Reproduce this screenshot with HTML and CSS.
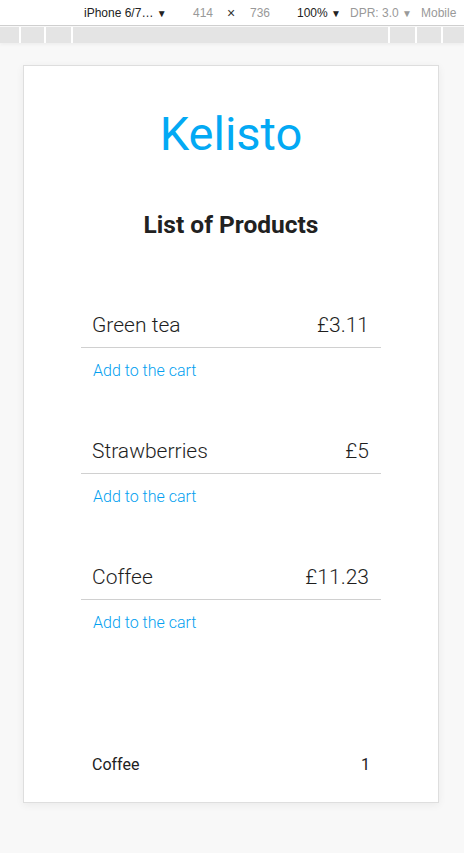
FILE: index.html
```html
<!DOCTYPE html>
<html>
<head>
<meta charset="utf-8">
<link rel="stylesheet" href="styles.css">
</head>
<body>
<div class="toolbar">
  <span class="tb tb-device">iPhone 6/7… <span class="arrow">▼</span></span>
  <span class="tb tb-w1 dim">414</span>
  <span class="tb tb-x">×</span>
  <span class="tb tb-w2 dim">736</span>
  <span class="tb tb-zoom">100% <span class="arrow">▼</span></span>
  <span class="tb tb-dpr dim">DPR: 3.0 <span class="arrow">▼</span></span>
  <span class="tb tb-mobile dim">Mobile</span>
</div>
<div class="ruler">
  <div class="r r1"></div><div class="r r2"></div><div class="r r3"></div><div class="r rmid"></div><div class="r r4"></div><div class="r r5"></div><div class="r r6"></div>
</div>
<div class="stage">
  <div class="device">
    <h1 class="logo">Kelisto</h1>
    <h2 class="title">List of Products</h2>
    <div class="products">
      <div class="product">
        <div class="row"><span class="name">Green tea</span><span class="price">£3.11</span></div>
        <a class="add">Add to the cart</a>
      </div>
      <div class="product">
        <div class="row"><span class="name">Strawberries</span><span class="price">£5</span></div>
        <a class="add">Add to the cart</a>
      </div>
      <div class="product">
        <div class="row"><span class="name">Coffee</span><span class="price">£11.23</span></div>
        <a class="add">Add to the cart</a>
      </div>
    </div>
    <div class="cart">
      <div class="cart-row"><span>Coffee</span><span>1</span></div>
    </div>
  </div>
</div>
</body>
</html>
```
FILE: styles.css
```css
html, body {
  margin: 0;
  padding: 0;
  background: #f8f8f8;
}
body {
  width: 464px;
  height: 853px;
  overflow: hidden;
}
.toolbar {
  height: 25px;
  padding-left: 84px;
  background: #fff;
  border-bottom: 1px solid #cfcfcf;
  display: flex;
  align-items: center;
  font-family: "Liberation Sans", Arial, sans-serif;
  font-size: 12px;
  color: #222;
  white-space: nowrap;
  overflow: hidden;
}
.tb { flex: none; }
.arrow { font-size: 10px; }
.dim { color: #999; }
.tb-device { width: 109px; }
.tb-w1 { width: 34px; }
.tb-x { width: 23px; font-size: 14px; color: #333; }
.tb-w2 { width: 47px; }
.tb-zoom { width: 53px; }
.tb-dpr { width: 71px; }
.ruler {
  margin-top: 1px;
  height: 16px;
  display: flex;
  gap: 2px;
  background: #fff;
  box-shadow: 0 2px 3px rgba(0,0,0,0.04);
}
.r { background: #e4e4e4; height: 16px; }
.r1 { width: 19px; }
.r2 { width: 23px; }
.r3 { width: 25px; }
.rmid { flex: 1; }
.r4 { width: 25px; }
.r5 { width: 24px; }
.r6 { width: 21px; }
.stage {
  padding-top: 22px;
  padding-left: 23px;
}
.device {
  width: 414px;
  height: 736px;
  background: #fff;
  border: 1px solid #dedede;
  box-shadow: 0 2px 8px rgba(0,0,0,0.06);
  display: flex;
  flex-direction: column;
  font-family: Roboto, "Noto Sans", sans-serif;
  color: #212121;
}
.logo {
  margin: 40px 0 0;
  font-size: 47px;
  line-height: 56px;
  font-weight: 400;
  color: #03a9f4;
  text-align: center;
}
.title {
  margin: 49px 0 0;
  font-size: 24.5px;
  line-height: 28px;
  font-weight: 700;
  text-align: center;
  color: #212121;
}
.products {
  width: 300px;
  margin: 64px auto 0;
  display: flex;
  flex-direction: column;
  gap: 48px;
}
.product {
  display: flex;
  flex-direction: column;
}
.row {
  display: flex;
  justify-content: space-between;
  padding: 10px 12px 10px 11px;
  border-bottom: 1px solid #d0d0d0;
  font-size: 21px;
  line-height: 24px;
  font-weight: 300;
  color: #1e1e1e;
}
.add {
  margin-top: 13px;
  padding-left: 12px;
  font-size: 16px;
  line-height: 20px;
  font-weight: 300;
  color: #039ff0;
  cursor: pointer;
}
.cart {
  margin-top: auto;
  padding: 0 68px 27px 68px;
}
.cart-row {
  display: flex;
  justify-content: space-between;
  font-size: 16px;
  line-height: 20px;
  color: #212121;
}
```
